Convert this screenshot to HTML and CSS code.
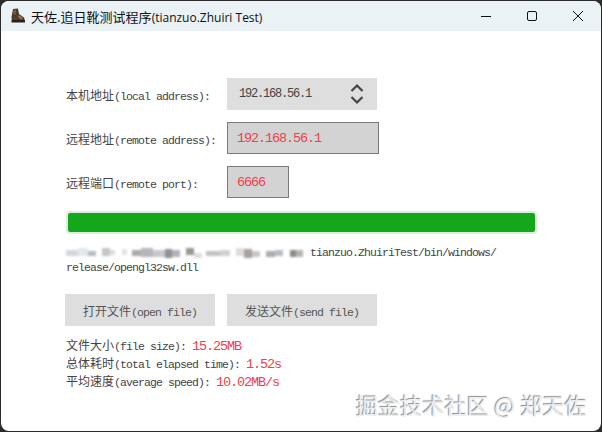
FILE: index.html
```html
<!DOCTYPE html>
<html lang="zh-CN">
<head>
    <meta charset="UTF-8">
    <meta name="viewport" content="width=device-width, initial-scale=1.0">
    <title>天佐.追日靴测试程序</title>
    <link rel="stylesheet" href="styles.css">
</head>
<body>
    <div class="window">
        <div class="titlebar">
            <svg class="app-icon" width="16" height="16" viewBox="0 0 16 16">
                <path d="M3 1 L8 0.5 L9 6 L14 9.5 L15 13 L2 14 L1.5 9 Z" fill="#4a3a30"/>
                <path d="M1.5 12 L15 12 L15 14.5 L1.5 14.5 Z" fill="#2a211c"/>
                <path d="M9 7 L13 10 L11 11.5 L8 9 Z" fill="#a5734f"/>
                <path d="M3.5 2 L6 2 L6 6 L3.5 7 Z" fill="#7a5a44"/>
            </svg>
            <div class="title"><span class="title-zh">天佐.追日靴测试程序</span>(tianzuo.Zhuiri Test)</div>
            <div class="controls">
                <svg width="46" height="30" viewBox="0 0 46 30"><path d="M18 15.5 H28" stroke="#111" stroke-width="1"/></svg>
                <svg width="46" height="30" viewBox="0 0 46 30"><rect x="18.5" y="10.5" width="9" height="9" rx="1.5" fill="none" stroke="#111" stroke-width="1"/></svg>
                <svg width="46" height="30" viewBox="0 0 46 30"><path d="M18 10 L28 20 M28 10 L18 20" stroke="#111" stroke-width="1"/></svg>
            </div>
        </div>

        <div class="content">
            <div class="row">
                <div class="label"><span class="zh">本机地址</span>(local address):</div>
                <div class="select">
                    <span>192.168.56.1</span>
                    <svg width="14" height="22" viewBox="0 0 14 22">
                        <path d="M1.5 8 L7 2.5 L12.5 8 M1.5 14 L7 19.5 L12.5 14" fill="none" stroke="#444" stroke-width="2.2"/>
                    </svg>
                </div>
            </div>
            <div class="row">
                <div class="label"><span class="zh">远程地址</span>(remote address):</div>
                <div class="field field-wide">192.168.56.1</div>
            </div>
            <div class="row">
                <div class="label"><span class="zh">远程端口</span>(remote port):</div>
                <div class="field field-short">6666</div>
            </div>

            <div class="progress"><div class="progress-bar"></div></div>

            <div class="path">
                <div class="path-line">
                    <svg class="mosaic" width="240" height="12" viewBox="0 0 240 12">
                        <rect x="0" y="3" width="12" height="6" fill="#d4d8dc"/>
                        <rect x="12" y="1" width="10" height="8" fill="#e2e8ee"/>
                        <rect x="22" y="4" width="8" height="5" fill="#b8bcc0"/>
                        <rect x="36" y="1" width="8" height="8" fill="#c4c6ca"/>
                        <rect x="44" y="3" width="5" height="5" fill="#e0dcd8"/>
                        <rect x="56" y="2" width="5" height="6" fill="#e4e4e4"/>
                        <rect x="66" y="3" width="9" height="6" fill="#a8aca8"/>
                        <rect x="75" y="1" width="12" height="9" fill="#b4b8bc"/>
                        <rect x="87" y="3" width="12" height="7" fill="#c8c8cc"/>
                        <rect x="99" y="2" width="7" height="9" fill="#8e9294"/>
                        <rect x="106" y="3" width="8" height="7" fill="#b0b4b6"/>
                        <rect x="120" y="1" width="8" height="7" fill="#9a9890"/>
                        <rect x="128" y="6" width="8" height="5" fill="#dcdcdc"/>
                        <rect x="140" y="4" width="14" height="5" fill="#c0c2c4"/>
                        <rect x="154" y="3" width="10" height="6" fill="#d0d0d0"/>
                        <rect x="170" y="1" width="8" height="8" fill="#dcdcd8"/>
                        <rect x="178" y="2" width="8" height="9" fill="#a8a29c"/>
                        <rect x="186" y="4" width="8" height="6" fill="#c8c8c8"/>
                        <rect x="200" y="4" width="9" height="6" fill="#a8acb4"/>
                        <rect x="209" y="3" width="8" height="6" fill="#b8bcc4"/>
                        <rect x="224" y="3" width="6" height="7" fill="#8c8c88"/>
                        <rect x="230" y="3" width="7" height="7" fill="#b4b4b0"/>
                    </svg>
                    <span>tianzuo.ZhuiriTest/bin/windows/</span>
                </div>
                <div>release/opengl32sw.dll</div>
            </div>

            <div class="buttons">
                <button class="btn"><span class="zh">打开文件</span>(open file)</button>
                <button class="btn"><span class="zh">发送文件</span>(send file)</button>
            </div>

            <div class="stats">
                <div><span class="zh">文件大小</span>(file size): <span class="value">15.25MB</span></div>
                <div><span class="zh">总体耗时</span>(total elapsed time): <span class="value">1.52s</span></div>
                <div><span class="zh">平均速度</span>(average speed): <span class="value">10.02MB/s</span></div>
            </div>
        </div>

        <div class="watermark">掘金技术社区 @ 郑天佐</div>
    </div>
</body>
</html>
```

FILE: styles.css
```css
html, body {
    margin: 0;
    height: 100%;
    background-color: #2b2b2b;
}
body {
    padding: 1px;
    box-sizing: border-box;
    overflow: hidden;
}
.window {
    position: relative;
    height: 430px;
    background-color: #fff;
    border-radius: 8px;
    overflow: hidden;
    font-family: "Liberation Mono", monospace;
    font-size: 11.5px;
    letter-spacing: -0.9px;
    color: #444;
}
.zh {
    font-family: "Noto Sans CJK SC", sans-serif;
    font-size: 12px;
    letter-spacing: 0;
}
.titlebar {
    display: flex;
    align-items: center;
    height: 30px;
    background-color: #eaf2f6;
    letter-spacing: 0;
}
.app-icon {
    margin-left: 9px;
    margin-right: 5px;
}
.title {
    flex: 1;
    font-family: "Open Sans", sans-serif;
    font-size: 12px;
    color: #111;
    white-space: nowrap;
}
.title-zh {
    font-family: "Noto Sans CJK SC", sans-serif;
    font-size: 13px;
}
.controls {
    display: flex;
}
.controls svg {
    display: block;
}
.content {
    display: flex;
    flex-direction: column;
    padding: 47px 0 0 65px;
}
.row {
    display: flex;
    align-items: center;
    height: 32px;
    margin-bottom: 12px;
}
.label {
    width: 161px;
    white-space: nowrap;
}
.select {
    display: flex;
    align-items: center;
    justify-content: space-between;
    box-sizing: border-box;
    width: 150px;
    height: 32px;
    padding: 0 13px 0 12px;
    background-color: #dedede;
}
.select span {
    font-size: 12px;
    letter-spacing: -1.2px;
}
.field {
    display: flex;
    align-items: center;
    box-sizing: border-box;
    height: 32px;
    padding-left: 9px;
    background-color: #d3d3d3;
    border: 1px solid #7a7a7a;
    color: #ee3f4a;
    font-size: 13.5px;
    letter-spacing: -1.1px;
}
.field-wide {
    width: 152px;
}
.field-short {
    width: 62px;
}
.progress {
    box-sizing: border-box;
    width: 471px;
    height: 23px;
    margin-top: 1px;
    border: 2px solid #dbeedc;
    border-radius: 4px;
}
.progress-bar {
    height: 100%;
    background-color: #14a71c;
    border-radius: 2px;
}
.path {
    margin-top: 11px;
    line-height: 15px;
}
.path-line {
    display: flex;
    align-items: center;
    gap: 4px;
}
.mosaic {
    display: block;
    filter: blur(0.8px);
}
.buttons {
    display: flex;
    gap: 12px;
    margin: 19px 0 0 -1px;
}
.btn {
    width: 150px;
    height: 32px;
    padding: 0;
    background-color: #dedede;
    border: none;
    color: #555;
    font: inherit;
    letter-spacing: inherit;
}
.stats {
    margin-top: 11px;
    line-height: 16px;
}
.value {
    color: #ee3f4a;
    font-size: 13.5px;
    letter-spacing: -1.1px;
}
.watermark {
    position: absolute;
    right: 14px;
    bottom: 14px;
    font-family: "Noto Sans CJK SC", sans-serif;
    font-size: 22px;
    line-height: 26px;
    letter-spacing: 0.2px;
    white-space: nowrap;
    color: #ededed;
    text-shadow: -1px -1px 1px #8a8a8a;
}
```
